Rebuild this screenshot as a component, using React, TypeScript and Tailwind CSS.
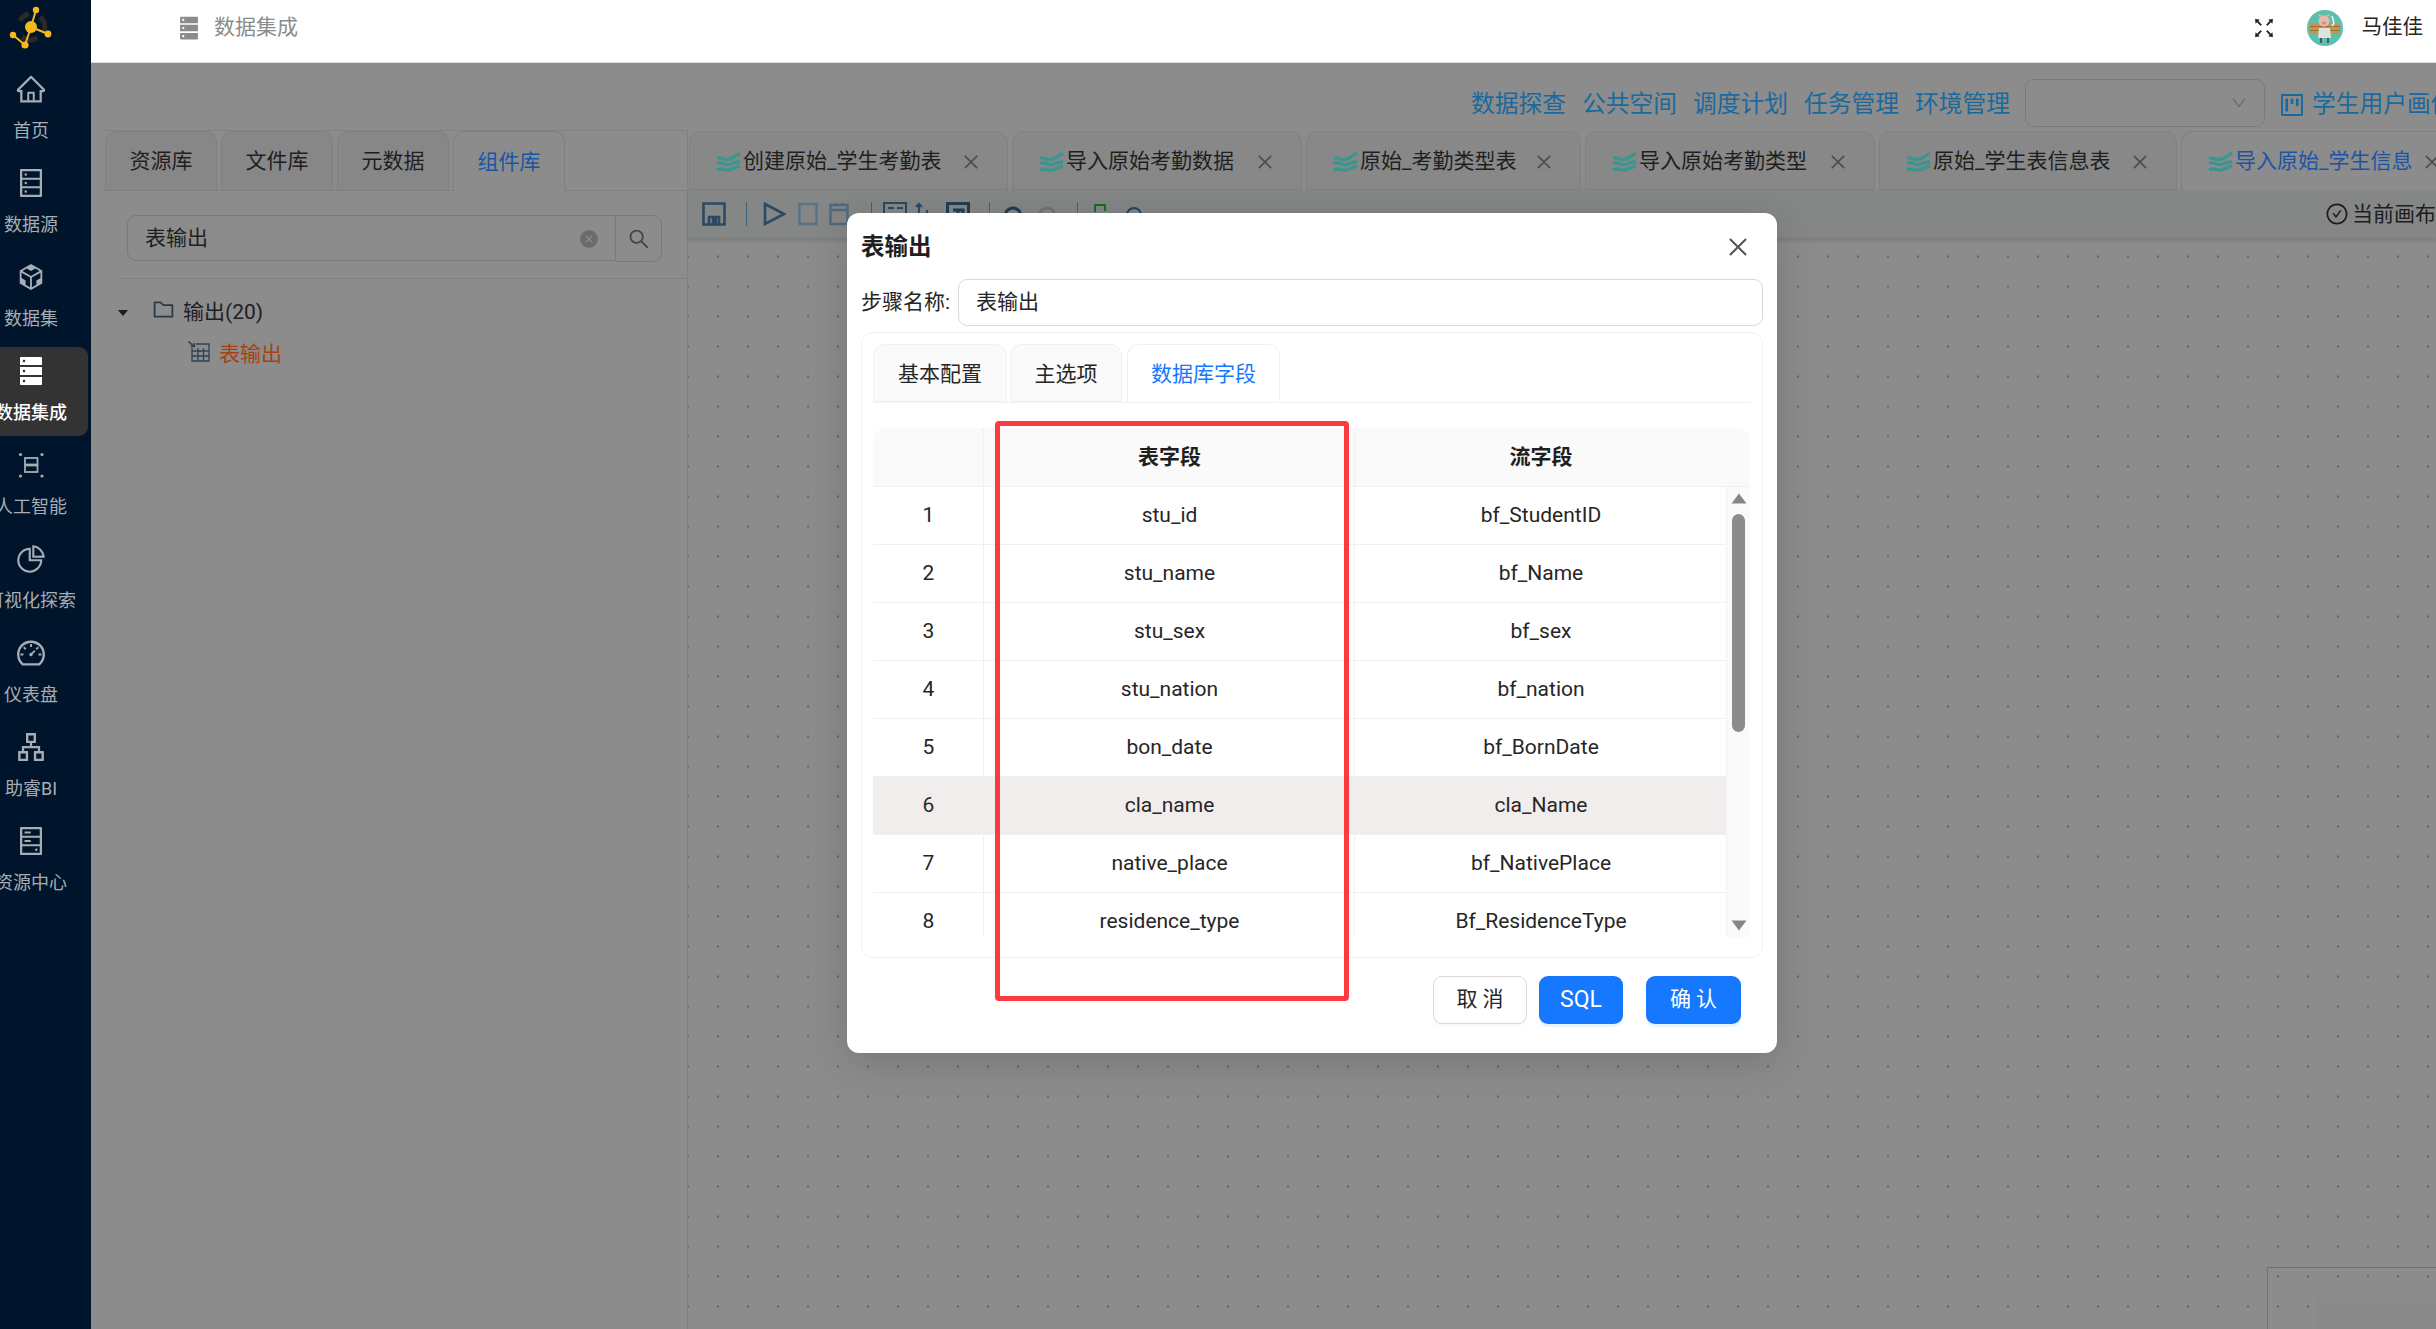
import React from "react";
import {
  AiOutlineHome, AiOutlineDatabase, AiOutlineCodeSandbox, AiFillDatabase,
  AiOutlinePieChart, AiOutlineDashboard, AiOutlineApartment, AiOutlineHdd, AiOutlineFullscreen,
  AiOutlineDown, AiOutlineProject, AiOutlineClose, AiOutlineSearch, AiFillCloseCircle,
  AiOutlineFolder, AiFillCaretDown, AiOutlineCheckCircle,
} from "react-icons/ai";

function GroupIcon({ size = 32, className = "" }: { size?: number; className?: string }) {
  return (
    <svg width={size} height={size} viewBox="0 0 32 32" className={className} fill="none" stroke="currentColor" strokeWidth="1.8">
      <circle cx="5.5" cy="5.5" r="1.6" fill="currentColor" stroke="none" />
      <circle cx="27" cy="5.5" r="1.6" fill="currentColor" stroke="none" />
      <circle cx="5.5" cy="27" r="1.6" fill="currentColor" stroke="none" />
      <circle cx="27" cy="27" r="1.6" fill="currentColor" stroke="none" />
      <rect x="10" y="9" width="12.5" height="6.5" />
      <rect x="10" y="16.5" width="12.5" height="6.5" />
    </svg>
  );
}

const nav = [
  { label: "首页", Icon: AiOutlineHome },
  { label: "数据源", Icon: AiOutlineDatabase },
  { label: "数据集", Icon: AiOutlineCodeSandbox },
  { label: "数据集成", Icon: AiFillDatabase, active: true },
  { label: "人工智能", Icon: GroupIcon },
  { label: "可视化探索", Icon: AiOutlinePieChart },
  { label: "仪表盘", Icon: AiOutlineDashboard },
  { label: "助睿BI", Icon: AiOutlineApartment },
  { label: "资源中心", Icon: AiOutlineHdd },
];

const flowTabs = [
  { label: "创建原始_学生考勤表", w: "w-[319px]" },
  { label: "导入原始考勤数据", w: "w-[290px]" },
  { label: "原始_考勤类型表", w: "w-[275px]" },
  { label: "导入原始考勤类型", w: "w-[290px]" },
  { label: "原始_学生表信息表", w: "w-[298px]" },
  { label: "导入原始_学生信息", w: "w-[288px]", active: true },
];

const rows = [
  ["1", "stu_id", "bf_StudentID"],
  ["2", "stu_name", "bf_Name"],
  ["3", "stu_sex", "bf_sex"],
  ["4", "stu_nation", "bf_nation"],
  ["5", "bon_date", "bf_BornDate"],
  ["6", "cla_name", "cla_Name"],
  ["7", "native_place", "bf_NativePlace"],
  ["8", "residence_type", "Bf_ResidenceType"],
];

function Logo() {
  return (
    <svg width="62" height="56" viewBox="0 0 62 56">
      <path d="M20 21a13 13 0 0 1 9-7M40 17a13 13 0 0 1 4 15M37 38a13 13 0 0 1-15-1" fill="none" stroke="#2b2a26" strokeWidth="5" />
      <g stroke="#f3b61f" strokeWidth="2" fill="none">
        <path d="M31 27L36 10M31 27L48 34M31 27L25 45M13 35L25 45" />
      </g>
      <g fill="#f5b81f">
        <circle cx="31" cy="27" r="6" />
        <circle cx="36" cy="10" r="3.2" />
        <circle cx="13" cy="35" r="3.2" />
        <circle cx="48" cy="34" r="3.4" />
        <circle cx="25" cy="45" r="3.6" />
      </g>
    </svg>
  );
}

function Avatar() {
  return (
    <svg width="36" height="36" viewBox="0 0 36 36" className="shrink-0">
      <circle cx="18" cy="18" r="18" fill="#5cc0ae" />
      <rect x="3" y="13" width="30" height="11" fill="#c9954e" />
      <rect x="3" y="16" width="30" height="1" fill="#9b6f35" />
      <rect x="3" y="20" width="30" height="1" fill="#9b6f35" />
      <path d="M12 18h11l1 10H11z" fill="#dfe3e0" />
      <circle cx="17" cy="11" r="5.5" fill="#e8b9ac" />
      <ellipse cx="17" cy="13" rx="2.4" ry="1.6" fill="#cf8d84" />
      <path d="M13 7l-2-3 4 1.5M21 7l2-3-4 1.5" fill="#e8b9ac" />
      <path d="M25 6l2 7-2 3" stroke="#f1f1ee" strokeWidth="1.6" fill="none" />
      <path d="M14 28v5M21 28v5" stroke="#555" strokeWidth="2" />
    </svg>
  );
}

function Waves() {
  return (
    <svg width="25" height="20" viewBox="0 0 25 20" className="shrink-0" fill="none" stroke="#3c9690" strokeWidth="3.4">
      <path d="M1 6c4-1 6 2 11 1.5S19 3 24 1.5" />
      <path d="M1 11.5c5-3 8 2.5 12 1s6-2 11-3" />
      <path d="M1 18c5-3 8 1 12 0s6-3 11-4" />
    </svg>
  );
}

function TableOut() {
  return (
    <svg width="22" height="21" viewBox="0 0 22 21" fill="none" stroke="#2f4353" strokeWidth="1.3" className="shrink-0">
      <path d="M8 3h13v17H4V7" />
      <path d="M4 10h17M4 15h17M10 7v13M15.5 7v13" />
      <path d="M0.5 0.5L6 5.5M2.5 5.5H6.3V2" strokeWidth="1.6" />
    </svg>
  );
}

function Sep() {
  return <div className="w-px h-[24px] bg-[#44617a] shrink-0" />;
}

function Toolbar() {
  const c = "#2b4a63";
  return (
    <div className="h-[48px] shrink-0 bg-[#858786] flex items-center justify-between pl-[14px] shadow-[0_3px_4px_rgba(0,0,0,0.12)] relative">
      <div className="flex items-center">
        <svg width="24" height="24" viewBox="0 0 24 24" fill="none" stroke={c} strokeWidth="2.6"><path d="M1.5 1.5h21v21h-21z" /><path d="M7 22v-7h10v7" /><path d="M11 17h3v5h-3z" fill={c} /></svg>
        <div className="ml-[20px]"><Sep /></div>
        <svg className="ml-[16px]" width="23" height="24" viewBox="0 0 23 24" fill="none" stroke={c} strokeWidth="2.6"><path d="M2 2l19 10L2 22z" /></svg>
        <svg className="ml-[12px]" width="20" height="24" viewBox="0 0 20 24" fill="none" stroke="#5a7286" strokeWidth="2.4"><path d="M1.5 2h17v20h-17z" /></svg>
        <svg className="ml-[11px]" width="20" height="24" viewBox="0 0 20 24" fill="none" stroke="#4d6a80" strokeWidth="2.4"><path d="M1.5 3h17v19h-17zM1 8h18M6 1v3M14 1v3" /></svg>
        <div className="ml-[22px]"><Sep /></div>
        <svg className="ml-[11px]" width="24" height="24" viewBox="0 0 24 24" fill="none" stroke={c} strokeWidth="2"><path d="M1 1h22v12H1z" /><path d="M5 6h6M14 6h6" /></svg>
        <svg className="ml-[7px]" width="19" height="24" viewBox="0 0 19 24" fill="none" stroke={c} strokeWidth="2"><path d="M5 2v16M2 5l3-3 3 3M13 8v12" /></svg>
        <svg className="ml-[13px]" width="24" height="24" viewBox="0 0 24 24" fill="none" stroke="#1f3d55" strokeWidth="3"><path d="M1.5 1.5h21v21h-21zM7 8h10v10M12 8v8" /></svg>
        <div className="ml-[19px]"><Sep /></div>
        <svg className="ml-[13px]" width="20" height="24" viewBox="0 0 20 24" fill="none" stroke="#1f3d55" strokeWidth="3"><path d="M2 14a8 8 0 0 1 16 0" /></svg>
        <svg className="ml-[14px]" width="21" height="24" viewBox="0 0 21 24" fill="none" stroke="#6e7478" strokeWidth="3"><path d="M2 14a8 8 0 0 1 16 0" /></svg>
        <div className="ml-[19px]"><Sep /></div>
        <svg className="ml-[15px]" width="14" height="24" viewBox="0 0 14 24" fill="none" stroke="#1c6b1c" strokeWidth="2"><path d="M2 10V3h10v6" /></svg>
        <svg className="ml-[17px]" width="20" height="24" viewBox="0 0 20 24" fill="none" stroke="#26465e" strokeWidth="2"><path d="M2 16a8 10 0 0 1 16 0" /></svg>
      </div>
      <div className="w-[111px] shrink-0 overflow-hidden flex items-center whitespace-nowrap text-[21px] leading-[30px] text-[#1d1d1d]">
        <AiOutlineCheckCircle className="shrink-0 text-[#1d1d1d]" size={24} />
        <span className="ml-[3px]">当前画布</span>
      </div>
    </div>
  );
}

function Triangle({ up }: { up?: boolean }) {
  return (
    <svg width="16" height="11" viewBox="0 0 16 11" className="shrink-0">
      <polygon points={up ? "8,0.5 15.5,10.5 0.5,10.5" : "0.5,0.5 15.5,0.5 8,10.5"} fill="#858585" />
    </svg>
  );
}

function Modal() {
  return (
    <div className="absolute left-[756px] top-[150px] w-[930px] h-[840px] bg-white rounded-[12px] shadow-[0_9px_42px_rgba(0,0,0,0.16)] px-[14px] text-[#262626]">
      <div className="h-[66px] flex items-start justify-between pt-[18px]">
        <span className="text-[23.5px] leading-[32px] font-bold text-[#1f1f1f]">表输出</span>
        <AiOutlineClose className="mr-[12px] mt-[3px] text-[#555]" size={26} />
      </div>
      <div className="flex items-center h-[47px]">
        <span className="w-[97px] shrink-0 text-[21px] leading-[30px] -mt-[2px] whitespace-nowrap">步骤名称:</span>
        <div className="flex-1 h-full border border-[#d9d9d9] rounded-[9px] pl-[17px] pt-[1px] flex items-center text-[21px]">表输出</div>
      </div>
      <div className="mt-[6px] h-[626px] border border-[#f0f0f0] rounded-[12px] px-[11px] pt-[12px]">
        <div className="flex items-end gap-[3px] h-[58px] border-b border-[#f0f0f0] text-[21px]">
          <div className="w-[134px] h-[58px] pt-[3px] flex items-center justify-center bg-[#fafafa] border border-[#f0f0f0] rounded-t-[12px]">基本配置</div>
          <div className="w-[112px] h-[58px] pt-[3px] flex items-center justify-center bg-[#fafafa] border border-[#f0f0f0] rounded-t-[12px]">主选项</div>
          <div className="ml-[2px] w-[153px] h-[58px] pt-[3px] flex items-center justify-center bg-white border border-[#f0f0f0] border-b-white rounded-t-[12px] text-[#1677ff]">数据库字段</div>
        </div>
        <div className="mt-[25px] h-[509px] w-[877px] overflow-hidden flex flex-col text-[21px]">
          <div className="h-[59px] shrink-0 flex bg-[#fafafa] border-b border-[#f0f0f0] rounded-t-[12px] font-bold text-[#1f1f1f]">
            <div className="w-[111px] border-r border-[#f0f0f0]" />
            <div className="w-[371px] pt-[2px] pl-[1px] border-r border-[#f0f0f0] flex items-center justify-center">表字段</div>
            <div className="w-[371px] pt-[2px] pl-[1px] flex items-center justify-center">流字段</div>
            <div className="w-[24px]" />
          </div>
          <div className="flex flex-1 min-h-0">
            <div className="w-[853px] overflow-hidden">
              {rows.map((r) => (
                <div key={r[0]} className={"h-[58px] grid grid-cols-[111px_371px_371px] border-b border-[#f0f0f0] " + (r[0] === "6" ? "bg-[#f1eded]" : "")}>
                  <div className="pt-[1px] pl-[1px] flex items-center justify-center border-r border-[#f0f0f0]">{r[0]}</div>
                  <div className="pt-[1px] pl-[1px] flex items-center justify-center border-r border-[#f0f0f0]">{r[1]}</div>
                  <div className="pt-[1px] pl-[1px] flex items-center justify-center">{r[2]}</div>
                </div>
              ))}
            </div>
            <div className="w-[24px] border-l border-[#f0f0f0] bg-[#fafafa] flex flex-col items-center pt-[6px] pb-[6px]">
              <Triangle up />
              <div className="mt-[10px] w-[13px] h-[218px] rounded-full bg-[#8c8c8c]" />
              <div className="mt-auto"><Triangle /></div>
            </div>
          </div>
        </div>
      </div>
      <div className="mt-[18px] flex justify-end pr-[22px] text-[21px]">
        <div className="w-[94px] h-[48px] rounded-[9px] border border-[#d9d9d9] flex items-center justify-center shadow-[0_3px_0_rgba(0,0,0,0.02)]">取 消</div>
        <div className="ml-[12px] w-[84px] h-[48px] rounded-[9px] bg-[#1677ff] text-white flex items-center justify-center shadow-[0_3px_0_rgba(5,145,255,0.1)] text-[23px]">SQL</div>
        <div className="ml-[23px] w-[95px] h-[48px] rounded-[9px] bg-[#1677ff] text-white flex items-center justify-center shadow-[0_3px_0_rgba(5,145,255,0.1)]">确 认</div>
      </div>
      <div className="absolute left-[148px] top-[208px] w-[354px] h-[580px] border-[5px] border-[#fb3b3f] rounded-[4px] pointer-events-none" />
    </div>
  );
}

export default function App() {
  return (
    <div className="w-[2436px] h-[1329px] overflow-hidden flex [font-family:'Roboto','Noto_Sans_CJK_SC',sans-serif] bg-[#8c8c8c]">
      <aside className="w-[91px] shrink-0 h-full bg-[#00152b] overflow-hidden flex flex-col">
        <div className="h-[65px] shrink-0"><Logo /></div>
        {nav.map(({ label, Icon, active }) => (
          <div key={label} className={"w-[88px] h-[89px] mb-[5px] shrink-0 rounded-r-[9px] " + (active ? "bg-[#333333] text-white" : "text-[#a6adb4]")}>
            <div className="w-[62px] h-full flex flex-col items-center pt-[8px]">
              <Icon size={32} className="shrink-0" />
              <span className={"mt-[13px] text-[18px] leading-[26px] whitespace-nowrap " + (active ? "font-medium" : "")}>{label}</span>
            </div>
          </div>
        ))}
      </aside>

      <div className="flex-1 min-w-0 h-full flex flex-col">
        <header className="h-[63px] shrink-0 bg-white border-b border-[#dcdcdc] flex items-start">
          <div className="h-[55px] flex items-center pl-[85px] text-[21px] text-[#8c8c8c] w-full">
            <AiFillDatabase size={26} className="text-[#8c8c8c]" />
            <span className="ml-[12px]">数据集成</span>
            <AiOutlineFullscreen size={26} className="ml-auto text-[#222]" />
            <div className="ml-[30px]"><Avatar /></div>
            <span className="ml-[19px] mr-[13px] text-[#262626] text-[20.5px] whitespace-nowrap">马佳佳</span>
          </div>
        </header>

        <main className="relative flex-1 min-h-0 flex flex-col overflow-hidden">
          <div className="h-[67px] shrink-0 pt-[17px] pl-[1380px] flex items-center whitespace-nowrap text-[23.75px] text-[#186a9e]">
            <span>数据探查</span>
            <span className="ml-[16px]">公共空间</span>
            <span className="ml-[16px]">调度计划</span>
            <span className="ml-[16px]">任务管理</span>
            <span className="ml-[16px]">环境管理</span>
            <div className="ml-[15px] -mt-[5px] w-[240px] h-[48px] shrink-0 border border-[#7a7a7a] rounded-[9px] flex items-center justify-end pr-[16px]">
              <AiOutlineDown size={18} className="text-[#6f6f6f]" />
            </div>
            <AiOutlineProject size={28} className="ml-[13px] shrink-0" />
            <span className="ml-[6px]">学生用户画像</span>
          </div>

          <div className="flex-1 min-h-0 flex">
            <div className="ml-[12px] w-[585px] shrink-0 border-t border-r border-[#818181] flex flex-col">
              <div className="h-[60px] shrink-0 border-b border-[#7f7f7f] flex items-end pl-[2px] gap-[4px] text-[21px]">
                {["资源库", "文件库", "元数据"].map((t) => (
                  <div key={t} className="w-[112px] h-[59px] pt-[2px] bg-[#878787] border border-b-0 border-[#808080] rounded-t-[12px] flex items-center justify-center text-[#1f1f1f]">{t}</div>
                ))}
                <div className="-mb-px w-[112px] h-[60px] pt-[2px] bg-[#8c8c8c] border border-b-0 border-[#808080] rounded-t-[12px] flex items-center justify-center text-[#1a55a5]">组件库</div>
              </div>
              <div className="mt-[24px] ml-[24px] w-[535px] h-[47px] flex text-[21px] text-[#1f1f1f]">
                <div className="w-[489px] h-[46px] border border-[#7a7a7a] rounded-l-[9px] flex items-center pl-[17px] pr-[16px] pt-[2px] justify-between">
                  <span>表输出</span>
                  <AiFillCloseCircle size={20} className="text-[#6b6b6b]" />
                </div>
                <div className="flex-1 border border-l-0 border-[#7a7a7a] rounded-r-[9px] flex items-center justify-center">
                  <AiOutlineSearch size={24} className="text-[#454545]" />
                </div>
              </div>
              <div className="mt-[16px] ml-[17px] border-t border-[#808080] pt-[20px]">
                <div className="flex items-center h-[28px] text-[21px] text-[#1f1f1f]">
                  <AiFillCaretDown size={14} className="-ml-[4px] text-[#1d1d1d]" />
                  <AiOutlineFolder size={25} className="ml-[21px] -mt-[8px] text-[#2b3a48]" />
                  <span className="ml-[7px] whitespace-nowrap">输出(20)</span>
                </div>
                <div className="mt-[14px] flex items-center h-[28px] text-[21px] text-[#a8420c] pl-[68px]">
                  <div className="-mt-[8px]"><TableOut /></div>
                  <span className="ml-[9px]">表输出</span>
                </div>
              </div>
            </div>

            <div className="flex-1 min-w-0 flex flex-col">
              <div className="h-[60px] shrink-0 flex items-start gap-[4px] overflow-hidden pl-[1px] pt-[1px] whitespace-nowrap text-[21px]">
                {flowTabs.map((t) => (
                  <div key={t.label} className={t.w + " shrink-0 h-[59px] pt-[2px] rounded-t-[12px] border border-[#808080] flex items-center pl-[26px] pr-[26px] " + (t.active ? "border-b-0 text-[#1a55a5] bg-[#8c8c8c]" : "bg-[#888888] text-[#1f1f1f]")}>
                    <Waves />
                    <span className="ml-[2px]">{t.label}</span>
                    <AiOutlineClose size={20} className="ml-auto shrink-0 text-[#4d4d4d]" />
                  </div>
                ))}
              </div>
              <Toolbar />
              <div className="relative flex-1 min-h-0 bg-[radial-gradient(circle,#636363_1px,transparent_1px)] bg-[length:30px_30px] bg-[position:-15px_3.5px]">
                <div className="absolute left-[1579px] top-[1029px] w-[300px] h-[200px] border border-[#4a7aa6] border-r-0 border-b-0">
                  <div className="ml-[48px] mt-[30px] h-full bg-[#8a8a8a]" />
                </div>
              </div>
            </div>
          </div>

          <Modal />
        </main>
      </div>
    </div>
  );
}
